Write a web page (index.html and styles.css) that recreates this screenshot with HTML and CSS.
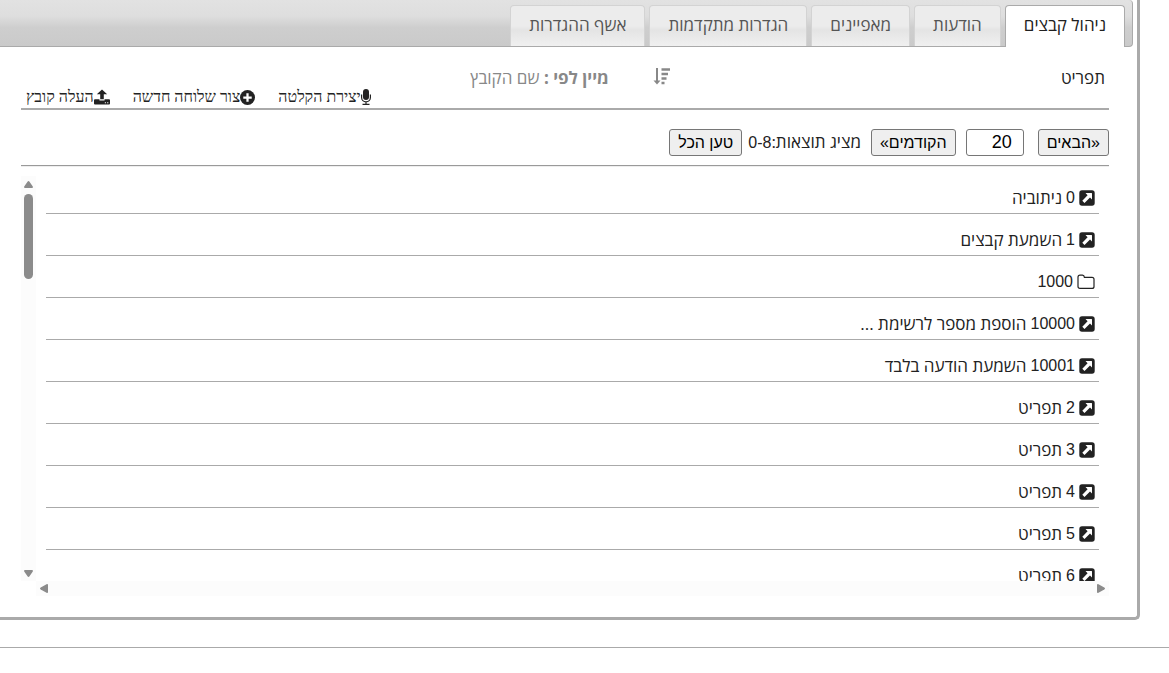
FILE: index.html
```html
<!DOCTYPE html>
<html lang="he" dir="rtl">
<head>
    <meta charset="UTF-8">
    <meta name="viewport" content="width=device-width, initial-scale=1.0">
    <title>ניהול קבצים</title>
    <link rel="stylesheet" href="styles.css">
</head>
<body>
    <!-- Shared icons -->
    <svg class="sprite" width="0" height="0">
        <symbol id="icon-link" viewBox="0 0 16 16">
            <path fill="currentColor" d="M3 .3h10A2.700 2.700 0 0 1 15.700 3v10a2.700 2.700 0 0 1-2.700 2.700H3A2.700 2.700 0 0 1 .3 13V3A2.700 2.700 0 0 1 3 .3z"/>
            <path fill="#fff" d="M6.500 3h6q.5 0 .5.500v6l-2-2-5.500 5.500-2.200-2.200L8.600 5.200z"/>
        </symbol>
        <symbol id="icon-folder" viewBox="0 0 18 16">
            <path fill="none" stroke="currentColor" stroke-width="1.200" d="M1 3.200q0-2 2-2h2.500q1.700 0 1.900 2.100H15q2 0 2 1.900v7.200q0 2-2 2H3q-2 0-2-2z"/>
        </symbol>
    </svg>

    <div class="panel">
        <nav class="tabs">
            <a class="tab active" href="#files">ניהול קבצים</a>
            <a class="tab" href="#messages">הודעות</a>
            <a class="tab" href="#attributes">מאפיינים</a>
            <a class="tab" href="#advanced">הגדרות מתקדמות</a>
            <a class="tab" href="#wizard">אשף ההגדרות</a>
        </nav>

        <main class="content">
            <div class="toolbar">
                <span class="title">תפריט</span>
                <div class="sort">
                    <svg width="18" height="18" viewBox="0 0 18 18" fill="none" stroke="currentColor">
                        <path stroke-width="2" d="M4 0v14"/>
                        <path fill="currentColor" stroke="none" d="M.5 12.500h7L4 16.500z"/>
                        <path stroke-width="2.600" d="M8.500 1.500H17M8.500 6h6.500M8.500 10.500h5M8.500 15h3"/>
                    </svg>
                    <span><b>מיין לפי :</b> שם הקובץ</span>
                </div>
                <div class="actions">
                    <a href="#record">
                        <svg width="10" height="16" viewBox="0 0 10 16" fill="none" stroke="currentColor">
                            <rect x="2" y="0" width="6" height="11" rx="3" fill="currentColor" stroke="none"/>
                            <path stroke-width="1.200" d="M.6 5.500v3a4.400 4.400 0 0 0 8.800 0v-3M5 12.500V15M1.500 15.300h7"/>
                        </svg>יצירת הקלטה</a>
                    <a href="#extension">
                        <svg width="15" height="15" viewBox="0 0 16 16">
                            <circle cx="8" cy="8" r="8" fill="currentColor"/>
                            <path stroke="#fff" stroke-width="2.400" d="M8 3.500v9M3.500 8h9"/>
                        </svg>צור שלוחה חדשה</a>
                    <a href="#upload">
                        <svg width="16" height="16" viewBox="0 0 17 16" fill="currentColor">
                            <path d="M8.500 0l5.500 5.200h-3.600v5.300H6.600V5.200H3z"/>
                            <path d="M1 10.500h4.800v1.200h5.400v-1.200H16q1 0 1 1V15q0 1-1 1H1q-1 0-1-1v-3.500q0-1 1-1z"/>
                            <path fill="#fff" d="M11.500 13.500h1.200v1.200h-1.200zM14 13.500h1.200v1.200H14z"/>
                        </svg>העלה קובץ</a>
                </div>
            </div>

            <div class="pager">
                <button type="button">«הבאים</button>
                <input type="text" value="20" aria-label="מספר תוצאות">
                <button type="button">הקודמים»</button>
                <span class="results">מציג תוצאות:<span class="num">0-8</span></span>
                <button type="button">טען הכל</button>
            </div>

            <div class="browser">
                <ul class="files">
                    <li><a href="#0"><svg class="icon"><use href="#icon-link"/></svg><span class="num">0</span> ניתוביה</a></li>
                    <li><a href="#1"><svg class="icon"><use href="#icon-link"/></svg><span class="num">1</span> השמעת קבצים</a></li>
                    <li><a href="#1000"><svg class="icon folder"><use href="#icon-folder"/></svg><span class="num">1000</span></a></li>
                    <li><a href="#10000"><svg class="icon"><use href="#icon-link"/></svg><span class="num">10000</span> הוספת מספר לרשימת ...</a></li>
                    <li><a href="#10001"><svg class="icon"><use href="#icon-link"/></svg><span class="num">10001</span> השמעת הודעה בלבד</a></li>
                    <li><a href="#2"><svg class="icon"><use href="#icon-link"/></svg><span class="num">2</span> תפריט</a></li>
                    <li><a href="#3"><svg class="icon"><use href="#icon-link"/></svg><span class="num">3</span> תפריט</a></li>
                    <li><a href="#4"><svg class="icon"><use href="#icon-link"/></svg><span class="num">4</span> תפריט</a></li>
                    <li><a href="#5"><svg class="icon"><use href="#icon-link"/></svg><span class="num">5</span> תפריט</a></li>
                    <li><a href="#6"><svg class="icon"><use href="#icon-link"/></svg><span class="num">6</span> תפריט</a></li>
                </ul>
                <div class="scroll-y">
                    <svg width="9" height="7" viewBox="0 0 9 7"><path d="M4.500 0q.6 0 1 .7L8.800 5.500Q9.300 7 8 7H1Q-.3 7 .2 5.500L3.500.7q.4-.7 1-.7z"/></svg>
                    <div class="thumb"></div>
                    <svg class="down" width="9" height="7" viewBox="0 0 9 7"><path d="M4.500 7q.6 0 1-.7L8.800 1.500Q9.300 0 8 0H1Q-.3 0 .2 1.500l3.300 4.800q.4.700 1 .7z"/></svg>
                </div>
                <div class="scroll-x">
                    <svg width="8" height="9" viewBox="0 0 8 9"><path d="M8 4.500q0 .6-.7 1L1.500 8.800Q0 9.300 0 8V1Q0-.3 1.500.2l5.800 3.300q.7.400.7 1z"/></svg>
                    <svg width="8" height="9" viewBox="0 0 8 9"><path d="M0 4.500q0 .6.700 1l5.800 3.300Q8 9.300 8 8V1Q8-.3 6.500.2L.7 3.500q-.7.400-.7 1z"/></svg>
                </div>
            </div>
        </main>
    </div>

    <hr class="divider">
</body>
</html>
```
FILE: styles.css
```css
body {
    margin: 0;
    background-color: #fff;
    color: #222;
    font-family: "Open Sans", "Liberation Sans", sans-serif;
    font-size: 17px;
    line-height: 20px;
    overflow: hidden;
}
a {
    color: inherit;
    text-decoration: none;
}
svg {
    flex: none;
}
.sprite {
    display: block;
}
.num {
    font-family: "Liberation Sans", sans-serif;
    font-size: 16px;
}
.panel {
    margin-right: 29px;
    border: 3px solid #aaa;
    border-width: 0 3px 3px 0;
    border-bottom-right-radius: 5px;
}

/* Tabs */
.tabs {
    display: flex;
    gap: 4px;
    margin-right: 4px;
    padding: 5px 7px 0;
    border: 1px solid #aaa;
    border-width: 0 1px 1px 0;
    border-radius: 0 4px 4px 0;
    background: linear-gradient(#e2e2e2, #dedede 35%, #cecece 60%, #cacaca);
}
.tab {
    padding: 9px 18px 11px;
    border: 1px solid #d3d3d3;
    border-bottom: 0;
    border-radius: 4px 4px 0 0;
    background: linear-gradient(#ececec 50%, #e4e4e4 60%, #f0f0f0);
    color: #555;
}
.tab.active {
    margin-bottom: -1px;
    border-color: #aaa;
    background: #fff;
    color: #212121;
}

/* Toolbar */
.content {
    padding: 18px 28px 21px 21px;
}
.toolbar {
    display: grid;
    grid-template-columns: 2fr 1fr 2fr;
    height: 43px;
    border-bottom: 2px solid #aaa;
}
.title {
    padding: 3px 4px;
}
.sort {
    display: flex;
    align-items: flex-start;
    gap: 44px;
    padding: 3px;
    white-space: nowrap;
    color: #888;
}
.actions {
    display: flex;
    align-items: flex-end;
    justify-content: flex-end;
    gap: 23px;
    padding: 0 0 1px 5px;
    font-family: "Liberation Serif", serif;
    font-size: 16px;
    white-space: nowrap;
}
.actions a {
    display: flex;
    align-items: center;
}

/* Paging */
.pager {
    display: flex;
    align-items: center;
    padding: 19px 0 9px;
    border-bottom: 1px solid #9a9a9a;
    box-shadow: 0 1px #eee;
}
.pager button,
.pager input {
    box-sizing: border-box;
    height: 27px;
    border: 1px solid #767676;
    border-radius: 3px;
    color: #000;
    font-family: "Liberation Sans", sans-serif;
    font-size: 18px;
}
.pager button {
    padding: 0 8px;
    background-color: #efefef;
    font-size: 16px;
}
.pager input {
    width: 58px;
    margin: 0 14px 0 10px;
    padding: 0 11px;
    background-color: #fff;
}
.results {
    margin: 0 10px 0 6px;
}

/* File list */
.browser {
    display: grid;
    grid-template: 405px 15px / 1fr 15px;
    margin-top: 10px;
}
.files {
    margin: 0 10px;
    padding: 0;
    overflow: hidden;
    list-style: none;
}
.files li {
    box-sizing: border-box;
    height: 42px;
    padding: 16px 4px 0;
    border-bottom: 1px solid #aaa;
}
.files li:first-child {
    height: 38px;
    padding-top: 12px;
}
.files a {
    display: flex;
    align-items: center;
    gap: 4px;
}
.icon {
    width: 16px;
    height: 16px;
}
.icon.folder {
    width: 18px;
}
.scroll-y,
.scroll-x {
    display: flex;
    align-items: center;
    background-color: #fcfcfc;
    fill: #8b8b8b;
}
.scroll-y {
    flex-direction: column;
    padding: 5px 0 4px;
}
.scroll-x {
    justify-content: space-between;
    padding: 0 4px;
}
.thumb {
    width: 9px;
    height: 85px;
    margin-top: 6px;
    border-radius: 5px;
    background-color: #8b8b8b;
}
.down {
    margin-top: auto;
}
.divider {
    margin: 27px 0 0;
    border: 0;
    border-top: 1px solid #aaa;
}
```
